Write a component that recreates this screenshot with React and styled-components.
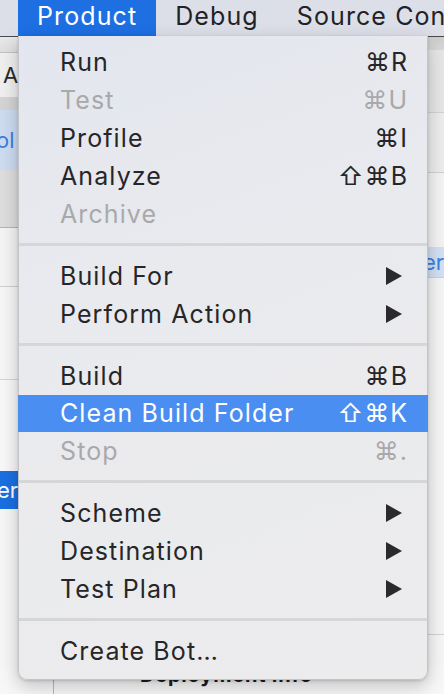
import React from 'react';
import styled, { createGlobalStyle } from 'styled-components';

const GlobalStyle = createGlobalStyle`
  html, body {
    margin: 0;
    padding: 0;
    background: #f6f6f6;
  }
  body {
    font-family: Inter, "Noto Sans", "DejaVu Sans", sans-serif;
    -webkit-font-smoothing: antialiased;
  }
`

const Screen = styled.div`
  position: relative;
  width: 444px;
  height: 694px;
  overflow: hidden;
  display: flex;
  flex-direction: column;
`

const MenuBar = styled.div`
  height: 36px;
  flex: none;
  display: flex;
  align-items: stretch;
  padding-left: 18px;
  background: #dcdfe8;
  border-bottom: 1px solid #4a4a4e;
  box-sizing: content-box;
`

const MenuTitle = styled.div`
  display: flex;
  align-items: center;
  padding: 0 19px 4px;
  font-size: 25px;
  letter-spacing: 1.1px;
  white-space: nowrap;
  color: ${p => (p.active ? '#ffffff' : '#222226')};
  background: ${p => (p.active ? '#1d6fe2' : 'transparent')};
`

const Window = styled.div`
  flex: 1;
  display: flex;
  flex-direction: column;
  min-height: 0;
`

const Panes = styled.div`
  flex: 1;
  display: flex;
  min-height: 0;
`

const Pane = styled.div`
  flex: 1;
  display: flex;
  flex-direction: column;
  overflow: hidden;
`

const Band = styled.div`
  flex: none;
  height: ${p => p.h}px;
  background: ${p => p.bg || '#f6f6f6'};
  border-bottom: ${p => (p.line ? `1px solid ${p.line}` : 'none')};
  display: flex;
  align-items: center;
  justify-content: ${p => (p.end ? 'flex-end' : 'flex-start')};
  font-size: 22px;
  color: ${p => p.color || '#2a2a2a'};
  white-space: nowrap;
  overflow: hidden;
`

const BandText = styled.span`
  margin-left: ${p => p.offset || 0}px;
`

const Chip = styled.div`
  height: 38px;
  width: 60px;
  margin-left: ${p => p.left || 0}px;
  background: #1b6fe1;
  color: #fff;
  font-size: 22px;
  display: flex;
  align-items: center;
  justify-content: flex-end;
  overflow: hidden;
`

const BottomRow = styled.div`
  flex: none;
  height: 28px;
  display: flex;
  background: #f7f7f7;
`

const Gutter = styled.div`
  width: 53px;
  border-right: 1px solid #b8b8b8;
`

const SectionTitle = styled.div`
  margin-left: 86px;
  font-size: 20px;
  font-weight: 700;
  letter-spacing: 0.8px;
  color: #1c1c1c;
  line-height: 18px;
`

const Menu = styled.div`
  position: absolute;
  top: 36px;
  left: 18px;
  width: 410px;
  height: 644px;
  box-sizing: border-box;
  padding: 7px 0 9px;
  background: linear-gradient(160deg, #e3e6ef 0%, #e9eaee 35%, #ececed 100%);
  border: 1px solid #c4c4c8;
  border-top: none;
  border-radius: 0 0 9px 9px;
  box-shadow: 0 6px 18px rgba(0, 0, 0, 0.22), 0 1px 3px rgba(0, 0, 0, 0.15);
  display: flex;
  flex-direction: column;
`

const Item = styled.div`
  height: 38px;
  display: flex;
  align-items: center;
  justify-content: space-between;
  padding: 0 20px 0 42px;
  font-size: 25px;
  letter-spacing: 1.1px;
  margin: 0 -1px;
  color: ${p => (p.disabled ? '#a9a9ab' : p.active ? '#ffffff' : '#262628')};
  background: ${p => (p.active ? '#4a8ef1' : 'transparent')};
`

const Label = styled.span`
  white-space: nowrap;
`

const Shortcut = styled.span`
  white-space: nowrap;
  letter-spacing: 1px;
`

const Separator = styled.div`
  height: 3px;
  margin: 10px 0 11px;
  background: #d6d6d9;
`

const SubmenuArrow = () => (
  <svg width="18" height="20" viewBox="0 0 18 20" style={{ marginRight: 5 }}>
    <polygon points="1,1 17,10 1,19" fill="#2a2a2c" />
  </svg>
)

const groups = [
  [
    { label: 'Run', key: '⌘R' },
    { label: 'Test', key: '⌘U', disabled: true },
    { label: 'Profile', key: '⌘I' },
    { label: 'Analyze', key: '⇧⌘B' },
    { label: 'Archive', disabled: true },
  ],
  [
    { label: 'Build For', sub: true },
    { label: 'Perform Action', sub: true },
  ],
  [
    { label: 'Build', key: '⌘B' },
    { label: 'Clean Build Folder', key: '⇧⌘K', active: true },
    { label: 'Stop', key: '⌘.', disabled: true },
  ],
  [
    { label: 'Scheme', sub: true },
    { label: 'Destination', sub: true },
    { label: 'Test Plan', sub: true },
  ],
  [{ label: 'Create Bot…' }],
]

const App = () => (
  <>
    <GlobalStyle />
    <Screen>
      <MenuBar>
        <MenuTitle active>Product</MenuTitle>
        <MenuTitle>Debug</MenuTitle>
        <MenuTitle>Source Control</MenuTitle>
      </MenuBar>

      <Window>
        <Panes>
          <Pane>
            <Band h={15} bg="linear-gradient(#e8e8e8, #dedede)" line="#c2c2c2" />
            <Band h={44} bg="#efefef">
              <BandText offset={3}>All</BandText>
            </Band>
            <Band h={13} bg="#d4d4d4" />
            <Band h={60} bg="#cddcf1" color="#3c7fe0">
              <BandText offset={-4}>ol</BandText>
            </Band>
            <Band h={57} bg="#dddddd" line="#b4b4b4" />
            <Band h={58} bg="#f4f4f4" line="#cfcfcf" />
            <Band h={92} bg="#f6f6f6" line="#d4d4d4" />
            <Band h={91} bg="#f7f7f7" />
            <Chip left={-42}>er</Chip>
          </Pane>
          <Pane>
            <Band h={13} bg="linear-gradient(#cdcdcd, #d8d8d8)" />
            <Band h={62} bg="#e6e6e6" line="#d2d2d2" />
            <Band h={59} bg="#ececec" line="#d0d0d0" />
            <Band h={74} bg="#f3f3f3" />
            <Band h={30} bg="#d3e0f3" color="#3c7fe0" end>
              <BandText>er</BandText>
            </Band>
            <Band h={1} bg="#d0d0d0" />
            <Band h={356} bg="#f5f5f5" line="#d2d2d2" />
          </Pane>
        </Panes>
        <BottomRow>
          <Gutter />
          <SectionTitle>Deployment Info</SectionTitle>
        </BottomRow>
      </Window>

      <Menu>
        {groups.map((group, gi) => (
          <React.Fragment key={gi}>
            {gi > 0 && <Separator />}
            {group.map(item => (
              <Item key={item.label} disabled={item.disabled} active={item.active}>
                <Label>{item.label}</Label>
                {item.key && <Shortcut>{item.key}</Shortcut>}
                {item.sub && <SubmenuArrow />}
              </Item>
            ))}
          </React.Fragment>
        ))}
      </Menu>
    </Screen>
  </>
)

export default App;
